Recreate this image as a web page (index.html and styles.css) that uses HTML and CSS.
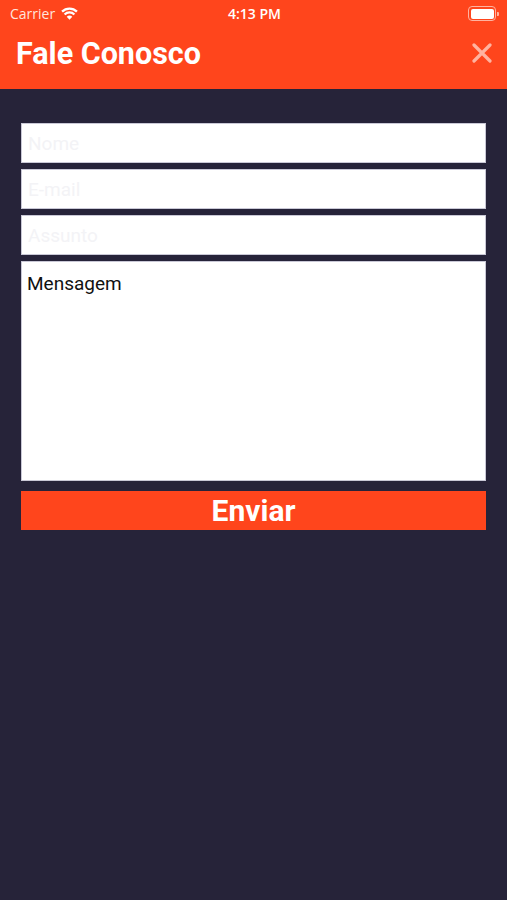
FILE: index.html
```html
<!DOCTYPE html>
<html lang="pt">
<head>
    <meta charset="UTF-8">
    <meta name="viewport" content="width=device-width, initial-scale=1.0">
    <title>Fale Conosco</title>
    <link rel="stylesheet" href="styles.css">
</head>
<body>
    <div class="header">
        <div class="status-bar">
            <div class="status-left">
                <span>Carrier</span>
                <svg class="wifi" width="17" height="13" viewBox="0 0 16 12">
                    <path d="M8 11.8 L5.4 9.1 A3.6 3.6 0 0 1 10.6 9.1 Z" fill="#fff"/>
                    <path d="M3.4 6.9 A6.5 6.5 0 0 1 12.6 6.9" stroke="#fff" stroke-width="2.2" fill="none"/>
                    <path d="M1 4.3 A10 10 0 0 1 15 4.3" stroke="#fff" stroke-width="2.2" fill="none"/>
                </svg>
            </div>
            <div class="status-time">4:13 PM</div>
            <div class="status-right">
                <div class="battery"><div class="battery-level"></div></div>
                <div class="battery-tip"></div>
            </div>
        </div>
        <div class="nav-bar">
            <h1>Fale Conosco</h1>
            <svg class="close" width="20" height="20" viewBox="0 0 20 20">
                <path d="M2 2 L18 18 M18 2 L2 18" stroke="#ffb3a0" stroke-width="3.2" stroke-linecap="round"/>
            </svg>
        </div>
    </div>

    <div class="form">
        <input type="text" class="field" placeholder="Nome">
        <input type="text" class="field" placeholder="E-mail">
        <input type="text" class="field" placeholder="Assunto">
        <textarea class="message" placeholder="Mensagem"></textarea>
        <button class="send">Enviar</button>
    </div>
</body>
</html>
```

FILE: styles.css
```css
html, body {
    margin: 0;
    padding: 0;
}
body {
    font-family: Roboto, "Liberation Sans", sans-serif;
    background-color: #262339;
    min-height: 900px;
}
.header {
    background-color: #ff451c;
    height: 89px;
    color: #fff;
}
.status-bar {
    height: 27px;
    display: flex;
    align-items: center;
    justify-content: space-between;
    padding: 0 8px 0 10px;
    font-family: "Open Sans", "Liberation Sans", sans-serif;
    font-size: 14px;
}
.status-left {
    display: flex;
    align-items: center;
    gap: 6px;
    width: 100px;
    color: #ffe6de;
}
.status-time {
    font-weight: 600;
}
.status-right {
    display: flex;
    align-items: center;
    justify-content: flex-end;
    width: 100px;
}
.battery {
    width: 23px;
    height: 10px;
    border: 1.5px solid #ffb3a0;
    border-radius: 4px;
    padding: 1.5px;
}
.battery-level {
    background-color: #fff;
    height: 100%;
    border-radius: 2px;
}
.battery-tip {
    width: 2px;
    height: 4px;
    background-color: #ffb3a0;
    margin-left: 1px;
    border-radius: 0 1px 1px 0;
}
.nav-bar {
    height: 62px;
    display: flex;
    align-items: center;
    justify-content: space-between;
    padding: 0 15px 10px 16px;
    box-sizing: border-box;
}
.nav-bar h1 {
    margin: 0;
    font-size: 30.5px;
    font-weight: 700;
}
.form {
    display: flex;
    flex-direction: column;
    gap: 6px;
    padding: 34px 21px 0 21px;
}
.field {
    height: 40px;
    box-sizing: border-box;
    border: 1px solid #c9c8d6;
    background-color: #fff;
    font-family: Roboto, "Liberation Sans", sans-serif;
    font-size: 19px;
    padding: 0 6px;
    margin: 0;
}
.field::placeholder {
    color: #f3f3f6;
}
.message {
    height: 220px;
    box-sizing: border-box;
    border: 1px solid #c9c8d6;
    background-color: #fff;
    font-family: Roboto, "Liberation Sans", sans-serif;
    font-size: 19px;
    padding: 10px 5px;
    margin: 0;
    resize: none;
}
.message::placeholder {
    color: #111;
}
.send {
    margin-top: 4px;
    height: 39px;
    border: none;
    background-color: #ff451c;
    color: #fff;
    font-family: Roboto, "Liberation Sans", sans-serif;
    font-size: 30px;
    font-weight: 700;
    padding: 0;
}
```
